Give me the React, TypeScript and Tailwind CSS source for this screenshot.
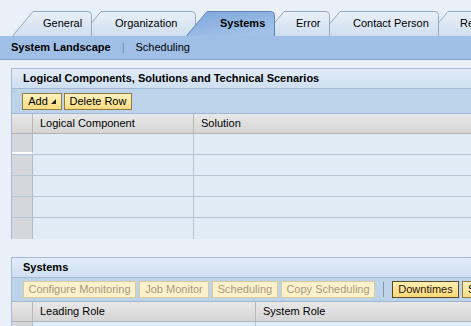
import React from "react";

type TabDef = {
  label: string;
  w: number;
  cls: string;
  active?: boolean;
};

const tabs: TabDef[] = [
  { label: "General", w: 80, cls: "w-[80px] ml-[12px] z-[6] pl-[31px]" },
  { label: "Organization", w: 116, cls: "w-[116px] -ml-[12px] z-[5] pl-[35px]" },
  { label: "Systems", w: 89, cls: "w-[89px] -ml-[10px] z-[10] pl-[34px]", active: true },
  { label: "Error", w: 67, cls: "w-[67px] -ml-[12px] z-[4] pl-[33px]" },
  { label: "Contact Person", w: 120, cls: "w-[120px] -ml-[11px] z-[3] pl-[34px]" },
  { label: "Reporting", w: 120, cls: "w-[120px] -ml-[12px] z-[2] pl-[33px]" },
];

function Tab({ t }: { t: TabDef }) {
  const s = 21;
  const h = 25;
  const fill = `M0,${h} L${s},1 L${t.w - 4},1 Q${t.w - 0.5},1 ${t.w - 0.5},4.5 L${t.w - 0.5},${h} Z`;
  const edge = `M0.5,${h} L${s},0.5 L${t.w - 4},0.5 Q${t.w - 0.5},0.5 ${t.w - 0.5},4.5 L${t.w - 0.5},${h}`;
  return (
    <div className={`relative h-[25px] shrink-0 flex items-center ${t.cls}`}>
      <svg className="absolute inset-0" width={t.w} height={h}>
        <defs>
          <linearGradient id="tabOff" x1="0" y1="0" x2="0" y2="1">
            <stop offset="0" stopColor="#e9f0f8" />
            <stop offset="1" stopColor="#cfdeee" />
          </linearGradient>
          <linearGradient id="tabOn" x1="0" y1="0" x2="0.6" y2="1">
            <stop offset="0" stopColor="#7ea6dc" />
            <stop offset="1" stopColor="#a2c1e7" />
          </linearGradient>
        </defs>
        <path d={fill} fill={t.active ? "url(#tabOn)" : "url(#tabOff)"} />
        <path d={edge} fill="none" stroke={t.active ? "#5f83b4" : "#93a9c4"} strokeWidth="1" />
      </svg>
      <span className={`relative whitespace-nowrap text-[11px] text-black ${t.active ? "font-bold" : ""}`}>
        {t.label}
      </span>
    </div>
  );
}

function Btn({
  children,
  w,
  kind = "on",
}: {
  children: React.ReactNode;
  w?: string;
  kind?: "on" | "off" | "hot";
}) {
  const look =
    kind === "off"
      ? "border-[#d9cb9c] bg-[#fcf1ca] text-[#a8997a]"
      : kind === "hot"
      ? "border-[#5a4826] bg-gradient-to-b from-[#fff0b0] to-[#fbd874] text-[#2e1212]"
      : "border-[#8f7d48] bg-gradient-to-b from-[#fff2bc] to-[#f9dc80] text-black";
  return (
    <button
      className={`h-[17px] shrink-0 border flex items-center justify-center gap-[3px] text-[11px] leading-none whitespace-nowrap ${look} ${w ?? "px-[5px]"}`}
    >
      {children}
    </button>
  );
}

function PanelHead({ title }: { title: string }) {
  return (
    <div className="h-[20px] border-b border-[#a3bad4] bg-gradient-to-b from-[#e1ecf7] to-[#cfdff0] pl-[11px] flex items-center text-[11px] font-bold text-black">
      {title}
    </div>
  );
}

function TableHead({ cols }: { cols: { label: string; w: string }[] }) {
  return (
    <div className="h-[20px] flex border-b border-[#b3b3b3] bg-gradient-to-b from-[#e8e8e8] to-[#d5d5d5] text-[11px] text-black">
      <div className="w-[21px] shrink-0 border-r border-[#b8b8b8]" />
      {cols.map((c) => (
        <div key={c.label} className={`${c.w} pl-[7px] flex items-center border-r border-[#b8b8b8]`}>
          {c.label}
        </div>
      ))}
    </div>
  );
}

function Row({ first, cw, last }: { first?: boolean; cw: string; last?: boolean }) {
  return (
    <div className={`h-[21px] flex ${last ? "" : "border-b border-[#b5c3d2]"}`}>
      <div
        className={`w-[21px] shrink-0 bg-[#d4d7dc] border-r border-[#b1bccb] ${first ? "border-b-2 border-b-white" : ""}`}
      />
      <div className={`${cw} bg-[#dfebf5] border-r border-[#b5c3d2]`} />
      <div className="flex-1 bg-[#dfebf5]" />
    </div>
  );
}

export default function App() {
  return (
    <div className="h-screen w-full overflow-hidden bg-[#e9f0f7] font-['Liberation_Sans',Arial,sans-serif]">
      <div className="w-[620px]">
        {/* tab strip */}
        <div className="flex pt-[11px]">
          {tabs.map((t) => (
            <Tab key={t.label} t={t} />
          ))}
        </div>

        {/* sub navigation */}
        <div className="h-[24px] border-b border-[#86a3c8] bg-[#9fbfe6] flex items-center pl-[11px] text-[11px] text-black">
          <span className="font-bold">System Landscape</span>
          <span className="mx-[11px] text-[#6f8fb8]">|</span>
          <span>Scheduling</span>
        </div>

        {/* logical components panel */}
        <div className="mt-[8px] ml-[11px] border-l border-t border-[#a4bad3]">
          <PanelHead title="Logical Components, Solutions and Technical Scenarios" />
          <div className="h-[25px] border-b border-[#9fb6d0] bg-[#bdd3ea] flex items-center gap-[2px] pl-[10px]">
            <Btn w="w-[40px]">
              <span>Add</span>
              <svg width="5" height="5" viewBox="0 0 5 5">
                <polygon points="5,0 5,5 0,5" fill="#222" />
              </svg>
            </Btn>
            <Btn w="w-[68px]">Delete Row</Btn>
          </div>
          <TableHead
            cols={[
              { label: "Logical Component", w: "w-[161px]" },
              { label: "Solution", w: "flex-1" },
            ]}
          />
          {[0, 1, 2, 3, 4].map((i) => (
            <Row key={i} first={i === 0} last={i === 4} cw="w-[161px]" />
          ))}
        </div>

        {/* systems panel */}
        <div className="mt-[18px] ml-[11px] border-l border-t border-[#a4bad3]">
          <PanelHead title="Systems" />
          <div className="h-[24px] border-b border-[#9fb6d0] bg-[#bdd3ea] flex items-center gap-[3px] pl-[11px]">
            <Btn kind="off" w="w-[113px]">Configure Monitoring</Btn>
            <Btn kind="off" w="w-[70px]">Job Monitor</Btn>
            <Btn kind="off" w="w-[66px]">Scheduling</Btn>
            <Btn kind="off" w="w-[94px]">Copy Scheduling</Btn>
            <div className="mx-[5px] h-[15px] w-px bg-[#8596ac]" />
            <Btn kind="hot" w="w-[67px]">Downtimes</Btn>
            <Btn kind="on">Status</Btn>
          </div>
          <TableHead
            cols={[
              { label: "Leading Role", w: "w-[223px]" },
              { label: "System Role", w: "flex-1" },
            ]}
          />
          <Row cw="w-[223px]" />
        </div>
      </div>
    </div>
  );
}
